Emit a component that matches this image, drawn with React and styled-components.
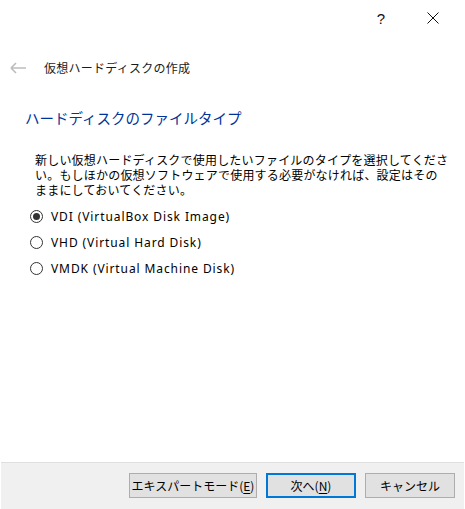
import React from "react";
import styled, { createGlobalStyle } from "styled-components";

const Global = createGlobalStyle`
  html, body { margin: 0; padding: 0; background: #ffffff; }
  body { font-family: "Noto Sans CJK JP", "Noto Sans", sans-serif; color: #000; }
`;

const Window = styled.div`
  width: 465px;
  height: 509px;
  display: flex;
  flex-direction: column;
  background: #ffffff;
  box-sizing: border-box;
`;

const TitleBar = styled.div`
  height: 36px;
  display: flex;
  justify-content: flex-end;
  align-items: center;
  padding-right: 22px;
  gap: 32px;
`;

const CaptionButton = styled.div`
  width: 20px;
  height: 20px;
  display: flex;
  align-items: center;
  justify-content: center;
  font-family: "Liberation Sans", sans-serif;
  font-size: 15px;
  color: #111;
`;

const NavRow = styled.div`
  margin-top: 20px;
  height: 24px;
  display: flex;
  align-items: center;
  padding-left: 10px;
  gap: 17px;
`;

const PageTitle = styled.div`
  font-size: 12px;
  line-height: 24px;
  letter-spacing: 0.25px;
  color: #1a1a1a;
`;

const Content = styled.div`
  flex: 1;
  display: flex;
  flex-direction: column;
`;

const Heading = styled.div`
  margin-top: 28px;
  padding-left: 25px;
  font-size: 14.5px;
  line-height: 20px;
  color: #003399;
`;

const Description = styled.p`
  margin: 24px 0 0 35px;
  font-size: 12px;
  line-height: 15px;
  letter-spacing: 0.2px;
  white-space: nowrap;
  color: #000;
`;

const RadioList = styled.div`
  margin-top: 6px;
  padding-left: 30px;
  display: flex;
  flex-direction: column;
`;

const RadioRow = styled.label`
  height: 26px;
  display: flex;
  align-items: center;
  gap: 8px;
  font-size: 12px;
  cursor: default;
`;

const RadioCircle = styled.span`
  width: 13px;
  height: 13px;
  box-sizing: border-box;
  border-radius: 50%;
  border: 1px solid #333333;
  background: #fff;
  display: flex;
  align-items: center;
  justify-content: center;
  &::after {
    content: "";
    width: 7px;
    height: 7px;
    border-radius: 50%;
    background: ${(p) => (p.$checked ? "#333333" : "transparent")};
  }
`;

const RadioText = styled.span`
  font-family: "Noto Sans", "Noto Sans CJK JP", sans-serif;
  font-size: 12px;
  letter-spacing: 0.9px;
  color: #000;
`;

const Footer = styled.div`
  height: 47px;
  box-sizing: border-box;
  border-top: 1px solid #dfdfdf;
  background: #f0f0f0;
  margin: 0 1px;
  display: flex;
  justify-content: flex-end;
  align-items: flex-start;
  padding: 10px 9px 0 0;
  gap: 9px;
`;

const Button = styled.button`
  width: ${(p) => p.$w || 90}px;
  height: 25px;
  box-sizing: border-box;
  background: #e1e1e1;
  border: ${(p) => (p.$default ? "2px solid #0078d7" : "1px solid #adadad")};
  font-family: "Noto Sans CJK JP", sans-serif;
  font-size: 12px;
  color: #000;
  padding: 0;
  display: flex;
  align-items: center;
  justify-content: center;
  line-height: 1;
  u { text-decoration: underline; text-underline-offset: 2px; }
`;

const options = [
  { label: "VDI (VirtualBox Disk Image)", checked: true },
  { label: "VHD (Virtual Hard Disk)", checked: false },
  { label: "VMDK (Virtual Machine Disk)", checked: false },
];

export default function App() {
  return (
    <>
      <Global />
      <Window>
        <TitleBar>
          <CaptionButton>?</CaptionButton>
          <CaptionButton>
            <svg width="12" height="12" viewBox="0 0 12 12">
              <path d="M0.5 0.5 L11.5 11.5 M11.5 0.5 L0.5 11.5" stroke="#111" strokeWidth="1" />
            </svg>
          </CaptionButton>
        </TitleBar>
        <Content>
          <NavRow>
            <svg width="17" height="12" viewBox="0 0 17 12">
              <path d="M1 6 H16 M1 6 L6 1 M1 6 L6 11" stroke="#bdbdbd" strokeWidth="1.6" fill="none" />
            </svg>
            <PageTitle>仮想ハードディスクの作成</PageTitle>
          </NavRow>
          <Heading>ハードディスクのファイルタイプ</Heading>
          <Description>
            新しい仮想ハードディスクで使用したいファイルのタイプを選択してくださ
            <br />
            い。もしほかの仮想ソフトウェアで使用する必要がなければ、設定はその
            <br />
            ままにしておいてください。
          </Description>
          <RadioList>
            {options.map((o) => (
              <RadioRow key={o.label}>
                <RadioCircle $checked={o.checked} />
                <RadioText>{o.label}</RadioText>
              </RadioRow>
            ))}
          </RadioList>
        </Content>
        <Footer>
          <Button $w={128}>
            エキスパートモード(<u>E</u>)
          </Button>
          <Button $default>
            次へ(<u>N</u>)
          </Button>
          <Button>キャンセル</Button>
        </Footer>
      </Window>
    </>
  );
}
